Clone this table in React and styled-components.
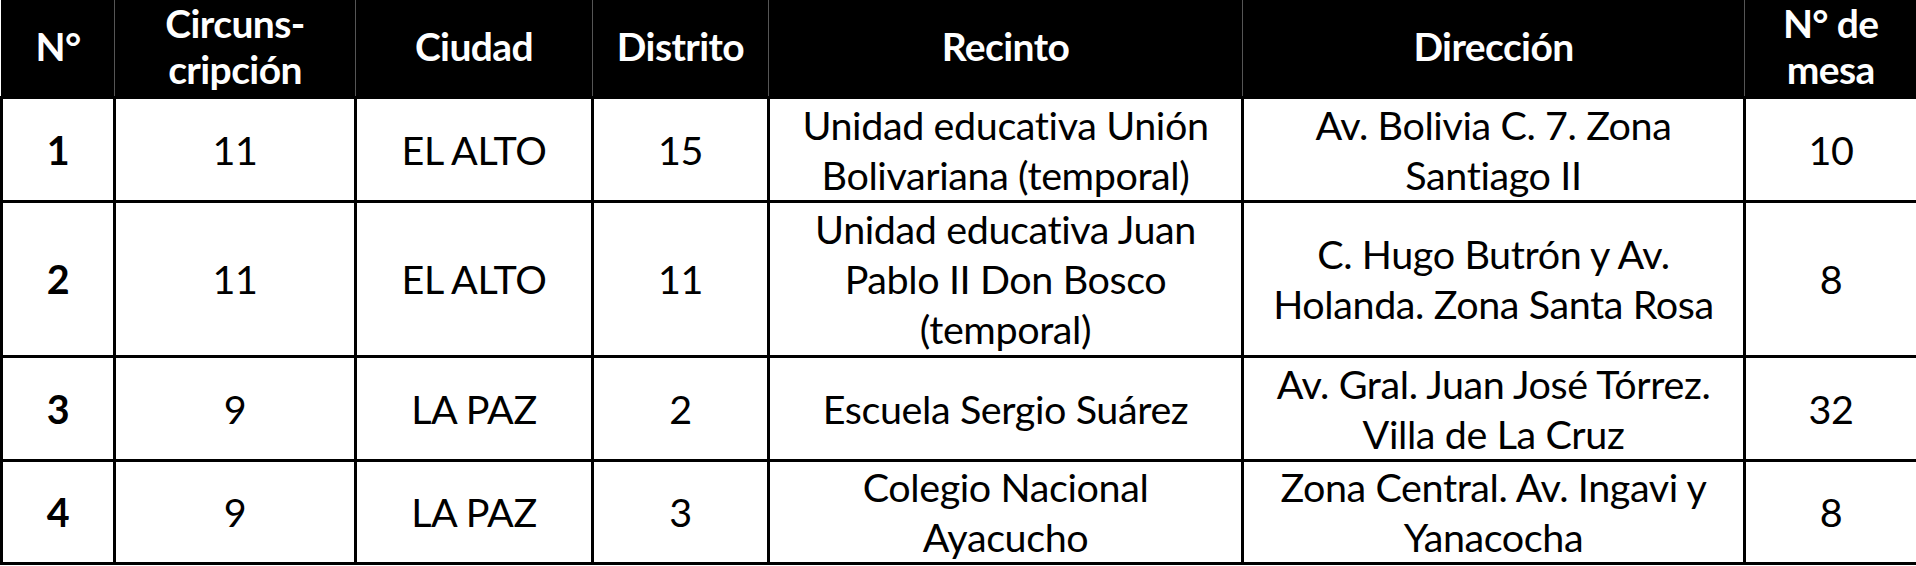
import React from "react";
import styled, { createGlobalStyle } from "styled-components";

const Global = createGlobalStyle`
  html, body { margin: 0; padding: 0; background: #ffffff; overflow: hidden; }
  body { font-family: Lato, "Open Sans", "Liberation Sans", sans-serif; }
`;

const Table = styled.table`
  width: 1916px;
  border-collapse: collapse;
  table-layout: fixed;
  font-family: Lato, "Liberation Sans", sans-serif;
  color: #000;
`;

const HeadRow = styled.tr`
  height: 97px;
  background: #000;
`;

const HeadCell = styled.th`
  color: #fff;
  font-weight: 700;
  font-size: 39px;
  line-height: 46px;
  text-align: center;
  vertical-align: middle;
  padding: 0 2px 4px;
  border-left: 1px solid #555;
  letter-spacing: -0.6px;
  &:first-child { border-left: 1px solid #000; }
  &:last-child { border-right: 2px solid #000; }
`;

const BodyRow = styled.tr`
  height: ${(p) => p.$h}px;
`;

const Cell = styled.td`
  border: 3px solid #000;
  text-align: center;
  vertical-align: middle;
  font-size: 39.5px;
  line-height: 50px;
  font-weight: ${(p) => (p.$bold ? 700 : 400)};
  padding: 0 4px;
  letter-spacing: -0.4px;
`;

const cols = [113, 241, 237, 176, 474, 502, 173];

const headers = [
  ["N°"],
  ["Circuns-", "cripción"],
  ["Ciudad"],
  ["Distrito"],
  ["Recinto"],
  ["Dirección"],
  ["N° de", "mesa"],
];

const rows = [
  {
    h: 104,
    cells: ["1", "11", "EL ALTO", "15", ["Unidad educativa Unión", "Bolivariana (temporal)"], ["Av. Bolivia C. 7. Zona", "Santiago II"], "10"],
  },
  {
    h: 155,
    cells: ["2", "11", "EL ALTO", "11", ["Unidad educativa Juan", "Pablo II Don Bosco", "(temporal)"], ["C. Hugo Butrón y Av.", "Holanda. Zona Santa Rosa"], "8"],
  },
  {
    h: 104,
    cells: ["3", "9", "LA PAZ", "2", "Escuela Sergio Suárez", ["Av. Gral. Juan José Tórrez.", "Villa de La Cruz"], "32"],
  },
  {
    h: 103,
    cells: ["4", "9", "LA PAZ", "3", ["Colegio Nacional", "Ayacucho"], ["Zona Central. Av. Ingavi y", "Yanacocha"], "8"],
  },
];

const Lines = ({ value }) =>
  Array.isArray(value)
    ? value.map((l, i) => (
        <React.Fragment key={i}>
          {i > 0 && <br />}
          {l}
        </React.Fragment>
      ))
    : value;

export default function App() {
  return (
    <>
      <Global />
      <Table>
        <colgroup>
          {cols.map((w, i) => (
            <col key={i} style={{ width: w }} />
          ))}
        </colgroup>
        <thead>
          <HeadRow>
            {headers.map((h, i) => (
              <HeadCell key={i}>
                <Lines value={h} />
              </HeadCell>
            ))}
          </HeadRow>
        </thead>
        <tbody>
          {rows.map((r, ri) => (
            <BodyRow key={ri} $h={r.h}>
              {r.cells.map((c, ci) => (
                <Cell key={ci} $bold={ci === 0}>
                  <Lines value={c} />
                </Cell>
              ))}
            </BodyRow>
          ))}
        </tbody>
      </Table>
    </>
  );
}
